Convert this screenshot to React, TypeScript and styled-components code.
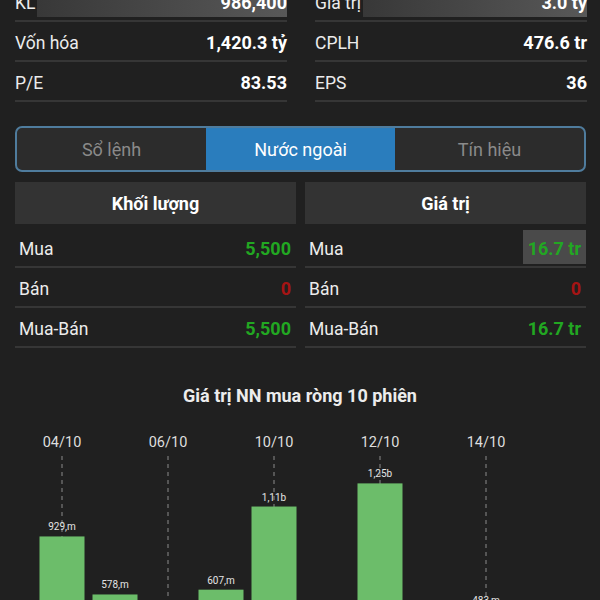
import styled, { createGlobalStyle } from 'styled-components'

const GlobalStyle = createGlobalStyle`
  body {
    margin: 0;
    background: #202020;
    font-family: Roboto, "Noto Sans", Arial, sans-serif;
    color: #ececec;
    overflow: hidden;
  }
`

const Page = styled.div`
  width: 600px;
  margin-top: -18px;
`

const Stats = styled.div`
  display: grid;
  grid-template-columns: 1fr 1fr;
  column-gap: 28px;
  padding: 0 13px 0 15px;
`

const StatRow = styled.div`
  height: 40px;
  box-sizing: border-box;
  padding-top: 3px;
  display: flex;
  align-items: center;
  justify-content: space-between;
  border-bottom: 2px solid #363636;
`

const StatLabel = styled.span`
  font-size: 17.5px;
  color: #ececec;
`

const StatValue = styled.span<{ $flash?: boolean }>`
  font-size: 18px;
  font-weight: 700;
  color: #fff;
  ${(p) =>
    p.$flash &&
    `
    flex: 1;
    margin-left: 2px;
    height: 28px;
    line-height: 28px;
    text-align: right;
    background: linear-gradient(to right, #383838, #585858);
  `}
`

const Tabs = styled.div`
  margin: 24px 14px 0 15px;
  height: 42px;
  display: grid;
  grid-template-columns: repeat(3, 1fr);
  border: 2px solid #4f7c9d;
  border-radius: 7px;
  overflow: hidden;
  background: #2c2c2c;
`

const Tab = styled.div<{ $active?: boolean }>`
  display: flex;
  align-items: center;
  justify-content: center;
  font-size: 18px;
  color: ${(p) => (p.$active ? '#ffffff' : '#8a8a8a')};
  background: ${(p) => (p.$active ? '#2a7dbd' : 'transparent')};
`

const Foreign = styled.div`
  display: grid;
  grid-template-columns: 1fr 1fr;
  column-gap: 9px;
  margin-top: 10px;
  padding: 0 14px 0 15px;
`

const Column = styled.div`
  display: flex;
  flex-direction: column;
`

const Header = styled.div`
  height: 42px;
  margin-bottom: 4px;
  display: flex;
  align-items: center;
  justify-content: center;
  background: #333333;
  font-size: 18px;
  font-weight: 700;
  color: #fff;
`

const Row = styled.div`
  height: 40px;
  box-sizing: border-box;
  display: flex;
  align-items: center;
  justify-content: space-between;
  padding: 0 5px 0 4px;
  border-bottom: 2px solid #363636;
`

const RowLabel = styled.span`
  font-size: 17.5px;
  color: #ececec;
  padding-top: 3px;
`

const Value = styled.span<{ $tone: 'up' | 'down'; $flash?: boolean }>`
  font-size: 18px;
  font-weight: 700;
  padding-top: 3px;
  color: ${(p) => (p.$tone === 'up' ? '#22a722' : '#a51414')};
  ${(p) =>
    p.$flash &&
    `
    margin-right: -5px;
    padding: 3px 5px 0;
    height: 31px;
    line-height: 31px;
    background: #4a4a4a;
  `}
`

const ChartTitle = styled.div`
  margin-top: 38px;
  line-height: 20px;
  text-align: center;
  font-size: 18px;
  font-weight: 700;
  color: #ececec;
`

const ChartSvg = styled.svg`
  display: block;
  margin-top: 14px;
`

const stats = [
  [
    { label: 'KL', value: '986,400', flash: true },
    { label: 'Vốn hóa', value: '1,420.3 tỷ' },
    { label: 'P/E', value: '83.53' },
  ],
  [
    { label: 'Giá trị', value: '3.0 tỷ', flash: true },
    { label: 'CPLH', value: '476.6 tr' },
    { label: 'EPS', value: '36' },
  ],
]

const foreign = [
  {
    title: 'Khối lượng',
    rows: [
      { label: 'Mua', value: '5,500', tone: 'up' as const },
      { label: 'Bán', value: '0', tone: 'down' as const },
      { label: 'Mua-Bán', value: '5,500', tone: 'up' as const },
    ],
  },
  {
    title: 'Giá trị',
    rows: [
      { label: 'Mua', value: '16.7 tr', tone: 'up' as const, flash: true },
      { label: 'Bán', value: '0', tone: 'down' as const },
      { label: 'Mua-Bán', value: '16.7 tr', tone: 'up' as const },
    ],
  },
]

// 10 sessions, value in millions
const sessions = [
  { date: '04/10', value: 929, label: '929,m' },
  { date: '05/10', value: 578, label: '578,m' },
  { date: '06/10', value: 310, label: '310,m' },
  { date: '07/10', value: 607, label: '607,m' },
  { date: '10/10', value: 1110, label: '1,11b' },
  { date: '11/10', value: 240, label: '240,m' },
  { date: '12/10', value: 1250, label: '1,25b' },
  { date: '13/10', value: 150, label: '150,m' },
  { date: '14/10', value: 483, label: '483,m' },
  { date: '17/10', value: 200, label: '200,m' },
]

const baseY = 270
const scale = 1 / 6.05

function Chart() {
  return (
    <ChartSvg width={600} height={280} viewBox="0 0 600 280">
      {sessions.map((s, i) => {
        const cx = 62 + i * 53
        const top = baseY - s.value * scale
        return (
          <g key={s.date}>
            {i % 2 === 0 && (
              <>
                <text x={cx} y={27} textAnchor="middle" fontSize={14.5} fill="#dedede" fontFamily="Roboto, sans-serif">
                  {s.date}
                </text>
                <line x1={cx} y1={36} x2={cx} y2={280} stroke="#8a8a8a" strokeWidth={1} strokeDasharray="4 4" />
              </>
            )}
            <rect x={cx - 22.5} y={top} width={45} height={baseY - top} fill="#6cbd6a" />
            <text x={cx} y={top - 6} textAnchor="middle" fontSize={10} fill="#e4e4e4" fontFamily="Roboto, sans-serif">
              {s.label}
            </text>
          </g>
        )
      })}
    </ChartSvg>
  )
}

export default function App() {
  return (
    <>
      <GlobalStyle />
      <Page>
        <Stats>
          {stats.map((col, ci) => (
            <Column key={ci}>
              {col.map((r) => (
                <StatRow key={r.label}>
                  <StatLabel>{r.label}</StatLabel>
                  <StatValue $flash={r.flash}>{r.value}</StatValue>
                </StatRow>
              ))}
            </Column>
          ))}
        </Stats>

        <Tabs>
          <Tab>Sổ lệnh</Tab>
          <Tab $active>Nước ngoài</Tab>
          <Tab>Tín hiệu</Tab>
        </Tabs>

        <Foreign>
          {foreign.map((col) => (
            <Column key={col.title}>
              <Header>{col.title}</Header>
              {col.rows.map((r) => (
                <Row key={r.label}>
                  <RowLabel>{r.label}</RowLabel>
                  <Value $tone={r.tone} $flash={r.flash}>
                    {r.value}
                  </Value>
                </Row>
              ))}
            </Column>
          ))}
        </Foreign>

        <ChartTitle>Giá trị NN mua ròng 10 phiên</ChartTitle>
        <Chart />
      </Page>
    </>
  )
}
